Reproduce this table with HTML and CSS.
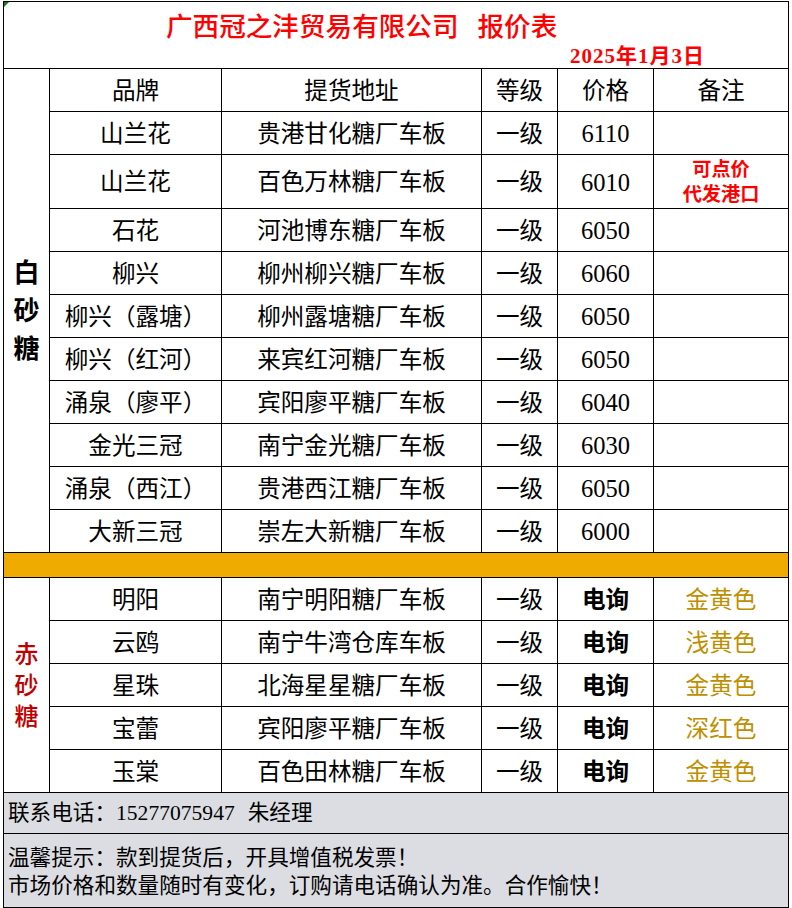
FILE: index.html
```html
<!DOCTYPE html>
<html lang="zh-CN">
<head>
<meta charset="utf-8">
<title>报价表</title>
<link rel="stylesheet" href="styles.css">
</head>
<body>
<div class="sheet">
  <span class="note-mark"></span>
  <table class="quote">
    <colgroup>
      <col class="c-side"><col class="c-brand"><col class="c-addr"><col class="c-grade"><col class="c-price"><col class="c-note">
    </colgroup>
    <tr class="r-title">
      <td colspan="6" class="title-cell">
        <div class="title">广西冠之沣贸易有限公司<span class="gap"></span>报价表</div>
        <div class="date"><span class="num">2025</span>年<span class="num">1</span>月<span class="num">3</span>日</div>
      </td>
    </tr>
    <tr class="r-std head">
      <td rowspan="11" class="side white-side"><div class="vert">白<br>砂<br>糖</div></td>
      <td>品牌</td><td>提货地址</td><td>等级</td><td>价格</td><td>备注</td>
    </tr>
    <tr class="r-std"><td>山兰花</td><td>贵港甘化糖厂车板</td><td>一级</td><td class="num">6110</td><td></td></tr>
    <tr class="r-tall"><td>山兰花</td><td>百色万林糖厂车板</td><td>一级</td><td class="num">6010</td><td class="remark">可点价<br>代发港口</td></tr>
    <tr class="r-std"><td>石花</td><td>河池博东糖厂车板</td><td>一级</td><td class="num">6050</td><td></td></tr>
    <tr class="r-std"><td>柳兴</td><td>柳州柳兴糖厂车板</td><td>一级</td><td class="num">6060</td><td></td></tr>
    <tr class="r-std"><td>柳兴（露塘）</td><td>柳州露塘糖厂车板</td><td>一级</td><td class="num">6050</td><td></td></tr>
    <tr class="r-std"><td>柳兴（红河）</td><td>来宾红河糖厂车板</td><td>一级</td><td class="num">6050</td><td></td></tr>
    <tr class="r-std"><td>涌泉（廖平）</td><td>宾阳廖平糖厂车板</td><td>一级</td><td class="num">6040</td><td></td></tr>
    <tr class="r-std"><td>金光三冠</td><td>南宁金光糖厂车板</td><td>一级</td><td class="num">6030</td><td></td></tr>
    <tr class="r-std"><td>涌泉（西江）</td><td>贵港西江糖厂车板</td><td>一级</td><td class="num">6050</td><td></td></tr>
    <tr class="r-std"><td>大新三冠</td><td>崇左大新糖厂车板</td><td>一级</td><td class="num">6000</td><td></td></tr>
    <tr class="r-band"><td colspan="6"></td></tr>
    <tr class="r-std">
      <td rowspan="5" class="side red-side"><div class="vert">赤<br>砂<br>糖</div></td>
      <td>明阳</td><td>南宁明阳糖厂车板</td><td>一级</td><td class="ask">电询</td><td class="gold">金黄色</td>
    </tr>
    <tr class="r-std"><td>云鸥</td><td>南宁牛湾仓库车板</td><td>一级</td><td class="ask">电询</td><td class="gold">浅黄色</td></tr>
    <tr class="r-std"><td>星珠</td><td>北海星星糖厂车板</td><td>一级</td><td class="ask">电询</td><td class="gold">金黄色</td></tr>
    <tr class="r-std"><td>宝蕾</td><td>宾阳廖平糖厂车板</td><td>一级</td><td class="ask">电询</td><td class="gold">深红色</td></tr>
    <tr class="r-std"><td>玉棠</td><td>百色田林糖厂车板</td><td>一级</td><td class="ask">电询</td><td class="gold">金黄色</td></tr>
    <tr class="r-contact"><td colspan="6" class="foot">联系电话：<span class="num">15277075947</span><span class="sp"></span>朱经理</td></tr>
    <tr class="r-tips"><td colspan="6" class="foot tips">温馨提示：款到提货后，开具增值税发票！<br>市场价格和数量随时有变化，订购请电话确认为准。合作愉快！</td></tr>
  </table>
</div>
</body>
</html>
```

FILE: styles.css
```css
html, body {
  margin: 0;
  padding: 0;
  background: #ffffff;
}

.sheet {
  position: relative;
  padding: 1px 0 0 3px;
  font-family: "Liberation Serif", "Noto Sans CJK SC", serif;
  color: #000;
}

.note-mark {
  position: absolute;
  left: 4px;
  top: 2px;
  width: 0;
  height: 0;
  border-top: 5px solid #107c10;
  border-right: 5px solid transparent;
}

.quote {
  border-collapse: collapse;
  table-layout: fixed;
  width: 785px;
}

.quote td {
  border: 1px solid #000;
  padding: 3px 0 0 0;
  text-align: center;
  vertical-align: middle;
  font-size: 23.6px;
  line-height: 1;
  white-space: nowrap;
}

.c-side { width: 46px; }
.c-brand { width: 172px; }
.c-addr { width: 260px; }
.c-grade { width: 76px; }
.c-price { width: 96px; }
.c-note { width: 135px; }

.r-title td { height: 66px; }
.r-std td { height: 39px; }
.r-tall td { height: 50px; }
.r-band td { height: 24px; padding: 0; background: #f0ab00; }
.r-contact td { height: 40px; }
.r-tips td { height: 71px; }

.quote td.title-cell {
  text-align: left;
  vertical-align: top;
  padding: 0;
}

.title {
  padding: 10px 0 0 162px;
  font-size: 26.6px;
  line-height: 30px;
  font-weight: 500;
  color: #ff0000;
}

.gap {
  display: inline-block;
  width: 19px;
}

.date {
  padding: 2px 0 0 566px;
  font-size: 21px;
  line-height: 24px;
  letter-spacing: 1px;
  font-weight: 700;
  color: #ff0000;
}

.num {
  font-family: "Liberation Serif", serif;
}

td.num {
  font-size: 24.5px;
}

.side {
  font-weight: 700;
}

.vert {
  display: inline-block;
}

.white-side .vert {
  font-size: 26px;
  line-height: 38px;
  color: #000;
}

.red-side .vert {
  font-size: 24px;
  line-height: 31px;
  font-weight: 500;
  color: #c00000;
}

.quote td.remark {
  font-size: 19.2px;
  line-height: 25px;
  font-weight: 700;
  color: #ff0000;
  padding-top: 0;
}

.ask {
  font-weight: 700;
}

.gold {
  color: #bf8f00;
}

.quote td.foot {
  background: #dcdde2;
  text-align: left;
  padding: 0 0 0 4px;
  font-size: 21.6px;
  line-height: 28px;
}

.quote td.tips {
  padding-top: 2px;
}

.sp {
  display: inline-block;
  width: 13px;
}
```
